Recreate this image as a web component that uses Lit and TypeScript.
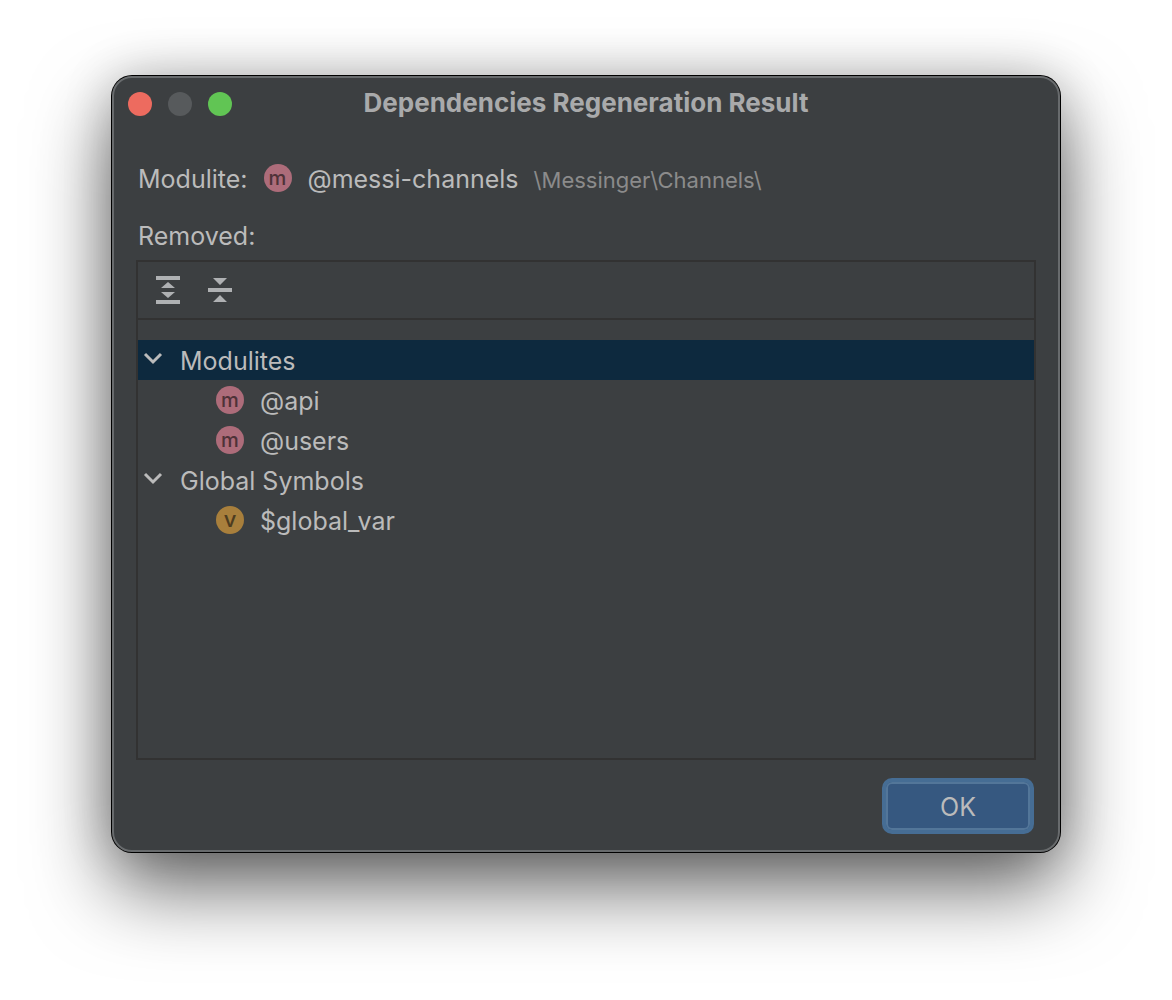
import { LitElement, html, css, svg } from "lit";
import { customElement, property, state } from "lit/decorators.js";

type Kind = "m" | "v";

interface Group {
  name: string;
  kind: Kind;
  items: string[];
}

const GROUPS: Group[] = [
  { name: "Modulites", kind: "m", items: ["@api", "@users"] },
  { name: "Global Symbols", kind: "v", items: ["$global_var"] },
];

const expandIcon = svg`
  <path d="M2 2h24v4H2zM2 26h24v4H2zM14 8l7 6H7zM7 18h14l-7 6z" />`;

const collapseIcon = svg`
  <path d="M2 14h24v4H2zM7 4h14l-7 7zM14 21l7 7H7z" />`;

@customElement("kind-badge")
export class KindBadge extends LitElement {
  @property({ reflect: true }) kind: Kind = "m";

  static styles = css`
    :host {
      display: flex;
      flex: none;
      justify-content: center;
      width: 28px;
      height: 28px;
      border-radius: 50%;
      background: #ad6c7a;
      color: #4f3238;
      font-size: 20px;
      line-height: 28px;
      font-weight: 500;
    }
    :host([kind="v"]) {
      background: #a87f3c;
      color: #4d3c20;
      font-size: 22px;
      line-height: 26px;
    }
  `;

  render() {
    return html`<span>${this.kind}</span>`;
  }
}

@customElement("app-root")
export class AppRoot extends LitElement {
  @state() private collapsed = new Set<string>();
  @state() private selected = "Modulites";

  static styles = css`
    :host {
      display: block;
      box-sizing: border-box;
      min-height: 100vh;
      padding: 76px 112px 148px;
      background: #fff;
      overflow: hidden;
      font-family: Inter, "Liberation Sans", sans-serif;
      font-size: 25px;
      line-height: 40px;
      color: #bbbbbb;
    }
    .window {
      display: flex;
      flex-direction: column;
      box-sizing: border-box;
      min-height: calc(100vh - 224px);
      border: 2px solid #686b6d;
      border-radius: 20px;
      background: #3c3f41;
      box-shadow: 0 0 0 1px #000, 0 36px 80px rgba(0, 0, 0, 0.6), 0 0 50px rgba(0, 0, 0, 0.2);
    }
    .titlebar {
      display: grid;
      grid-template-columns: 1fr auto 1fr;
      align-items: center;
      height: 52px;
      padding: 0 14px;
    }
    .lights {
      display: flex;
      gap: 16px;
    }
    .light {
      width: 24px;
      height: 24px;
      padding: 0;
      border: 0;
      border-radius: 50%;
      background: #575a5c;
    }
    .close {
      background: #ed6b5f;
    }
    .zoom {
      background: #61c554;
    }
    h1 {
      margin: 0;
      padding-bottom: 2px;
      font-size: 26px;
      font-weight: 700;
      color: #a9aaab;
    }
    .content {
      display: flex;
      flex: 1;
      flex-direction: column;
      padding: 28px 22px 16px;
    }
    .summary {
      display: flex;
      align-items: center;
      height: 40px;
      padding: 0 2px;
    }
    .summary kind-badge {
      margin: 0 16px;
    }
    .text {
      padding-top: 2px;
    }
    .path {
      margin-left: 8px;
      font-size: 22px;
      color: #8b8b8b;
    }
    .label {
      margin: 16px 2px 4px;
    }
    .panel {
      flex: 1;
      border: 2px solid #323232;
    }
    .toolbar {
      display: flex;
      gap: 24px;
      height: 56px;
      align-items: center;
      padding: 0 16px;
      border-bottom: 2px solid #323232;
    }
    .tool {
      display: flex;
      width: 28px;
      height: 32px;
      padding: 0;
      border: 0;
      background: none;
      fill: #afb1b3;
    }
    .tree,
    .children {
      margin: 0;
      padding: 0;
      list-style: none;
    }
    .tree {
      padding-top: 20px;
    }
    .row {
      display: flex;
      align-items: center;
      width: 100%;
      height: 40px;
      padding: 0 4px;
      border: 0;
      background: none;
      color: inherit;
      font: inherit;
      text-align: left;
    }
    .row.selected {
      background: #0d293e;
    }
    .chevron {
      width: 22px;
      height: 22px;
      margin-right: 16px;
      fill: none;
      stroke: #bbbbbb;
      stroke-width: 3;
    }
    .folded {
      transform: rotate(-90deg);
    }
    .leaf {
      gap: 16px;
      padding-left: 78px;
    }
    .actions {
      display: flex;
      justify-content: flex-end;
      padding: 18px 2px 0;
    }
    .ok {
      width: 152px;
      height: 56px;
      padding: 2px 0 0;
      border: 4px solid #466d94;
      border-radius: 10px;
      background: #365880;
      box-shadow: inset 0 0 0 2px #537699;
      color: #bbbbbb;
      font: inherit;
    }
  `;

  private toggle(name: string) {
    const next = new Set(this.collapsed);
    if (!next.delete(name)) next.add(name);
    this.collapsed = next;
    this.selected = name;
  }

  private renderGroup(group: Group) {
    const folded = this.collapsed.has(group.name);
    return html`
      <li role="treeitem" aria-expanded=${folded ? "false" : "true"}>
        <button
          class="row ${this.selected === group.name ? "selected" : ""}"
          @click=${() => this.toggle(group.name)}
        >
          <svg class="chevron ${folded ? "folded" : ""}" viewBox="0 0 22 22" aria-hidden="true">
            <path d="M3 5l8 8 8-8" />
          </svg>
          <span class="text">${group.name}</span>
        </button>
        ${folded
          ? ""
          : html`<ul class="children" role="group">
              ${group.items.map(
                (item) => html`<li role="treeitem">
                  <button
                    class="row leaf ${this.selected === item ? "selected" : ""}"
                    @click=${() => (this.selected = item)}
                  >
                    <kind-badge kind=${group.kind}></kind-badge>
                    <span class="text">${item}</span>
                  </button>
                </li>`
              )}
            </ul>`}
      </li>
    `;
  }

  render() {
    return html`
      <main class="window" role="dialog" aria-labelledby="title">
        <header class="titlebar">
          <div class="lights">
            <button class="light close" aria-label="Close"></button>
            <button class="light" aria-label="Minimize" disabled></button>
            <button class="light zoom" aria-label="Zoom"></button>
          </div>
          <h1 id="title">Dependencies Regeneration Result</h1>
        </header>
        <section class="content">
          <div class="summary">
            <span class="text">Modulite:</span>
            <kind-badge kind="m"></kind-badge>
            <span class="text">@messi-channels <span class="path">\\Messinger\\Channels\\</span></span>
          </div>
          <div class="label text" id="removed">Removed:</div>
          <div class="panel">
            <div class="toolbar">
              <button
                class="tool"
                aria-label="Expand all"
                @click=${() => (this.collapsed = new Set())}
              >
                <svg width="28" height="32" viewBox="0 0 28 32">${expandIcon}</svg>
              </button>
              <button
                class="tool"
                aria-label="Collapse all"
                @click=${() => (this.collapsed = new Set(GROUPS.map((g) => g.name)))}
              >
                <svg width="28" height="32" viewBox="0 0 28 32">${collapseIcon}</svg>
              </button>
            </div>
            <ul class="tree" role="tree" aria-labelledby="removed">
              ${GROUPS.map((group) => this.renderGroup(group))}
            </ul>
          </div>
          <div class="actions">
            <button class="ok">OK</button>
          </div>
        </section>
      </main>
    `;
  }
}
